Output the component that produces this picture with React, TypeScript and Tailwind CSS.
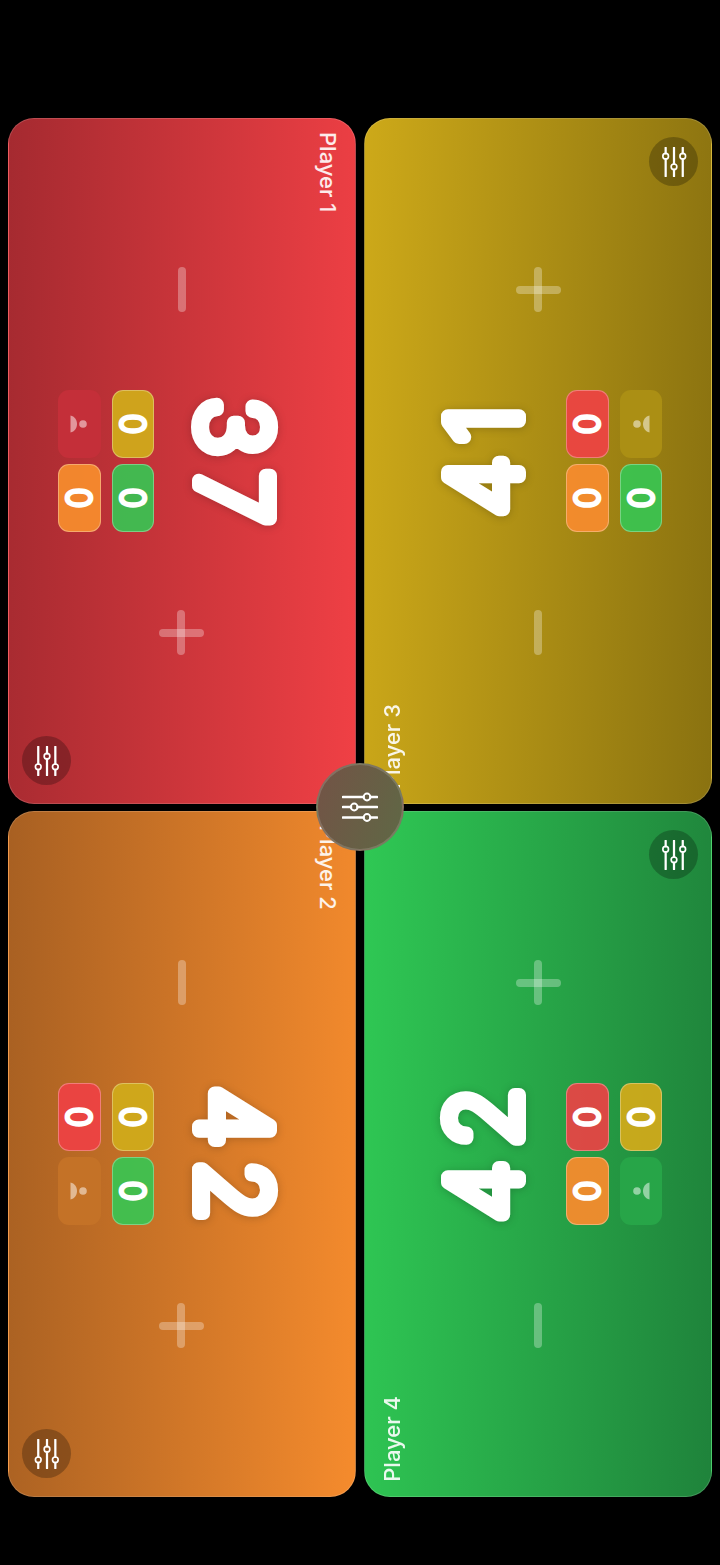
const PLAYERS = [
  { name: "Player 1", life: "37", self: 0, flip: false, card: "bg-[linear-gradient(92deg,#a52a30,#f04045)]", selfTile: "bg-[#c42f39]" },
  { name: "Player 3", life: "41", self: 1, flip: true, card: "bg-[linear-gradient(92deg,#cda919,#8a7210)]", selfTile: "bg-[#ab8f14]" },
  { name: "Player 2", life: "42", self: 2, flip: false, card: "bg-[linear-gradient(92deg,#a86022,#f58b2d)]", selfTile: "bg-[#c47227]" },
  { name: "Player 4", life: "42", self: 3, flip: true, card: "bg-[linear-gradient(92deg,#2fc854,#1f833b)]", selfTile: "bg-[#27a548]" },
];

const TILES = [
  "bg-[#f04045]/90 border-white/30",
  "bg-[#d0aa1a]/95 border-white/30",
  "bg-[#f58b2d]/95 border-white/30",
  "bg-[#35c653]/90 border-white/30",
];

function Sliders({ className }: { className: string }) {
  return (
    <svg viewBox="0 0 36 30" fill="none" stroke="currentColor" strokeLinecap="round" className={className}>
      <g strokeWidth="2.7">
        <path d="M1 5h20.5M28.5 5H35" />
        <path d="M1 15h8M15.5 15H35" />
        <path d="M1 25.5h20.5M28.5 25.5H35" />
      </g>
      <g strokeWidth="2">
        <circle cx="25" cy="5" r="3.4" />
        <circle cx="12.2" cy="15" r="3.4" />
        <circle cx="25" cy="25.5" r="3.4" />
      </g>
    </svg>
  );
}

function PersonIcon({ flip }: { flip: boolean }) {
  return (
    <svg viewBox="0 0 20 20" className={`w-[20px] h-[20px] ${flip ? "rotate-180" : ""}`}>
      <circle cx="14" cy="10" r="3.8" fill="#fff" fillOpacity="0.5" />
      <path d="M1.500 1.500c4 .8 6.500 4.200 6.500 8.500s-2.500 7.700-6.500 8.500Z" fill="#fff" fillOpacity="0.5" />
    </svg>
  );
}

// thin Inter with a wide round-joined stroke gives the rounded heavy numerals
function RoundNumber({ value, box, size, weight, stroke, spacing, flip, dy = 0, className }: {
  value: string; box: number; size: number; weight: number; stroke: number; spacing: number; flip: boolean; dy?: number; className?: string;
}) {
  const c = box / 2;
  return (
    <svg width={box} height={box} className={className}>
      <text
        x={c + spacing / 2}
        y={c + dy}
        textAnchor="middle"
        dominantBaseline="central"
        transform={`rotate(${flip ? -90 : 90} ${c} ${c})`}
        fontFamily="Inter, sans-serif"
        fontSize={size}
        fontWeight={weight}
        letterSpacing={spacing}
        fill="#fff"
        stroke="#fff"
        strokeWidth={stroke}
        strokeLinejoin="round"
        strokeLinecap="round"
      >
        {value}
      </text>
    </svg>
  );
}

function Counter({ index, player }: { index: number; player: (typeof PLAYERS)[number] }) {
  if (index === player.self) {
    return (
      <div className={`h-[68px] rounded-[11px] flex items-center justify-center ${player.selfTile}`}>
        <PersonIcon flip={player.flip} />
      </div>
    );
  }
  return (
    <div className={`h-[68px] rounded-[11px] border flex items-center justify-center ${TILES[index]}`}>
      <RoundNumber value="0" box={40} size={33} weight={200} stroke={4} spacing={0} flip={player.flip} />
    </div>
  );
}

function PlusSign({ nudge }: { nudge: boolean }) {
  return (
    <div className={`relative w-[45px] h-[45px] ${nudge ? "mr-[2px]" : ""}`}>
      <div className="absolute left-[18.500px] top-0 w-[8px] h-[45px] rounded-full bg-white/30" />
      <div className="absolute left-0 top-[18.500px] w-[45px] h-[8px] rounded-full bg-white/30" />
    </div>
  );
}

function PlayerCard({ player }: { player: (typeof PLAYERS)[number] }) {
  const { flip } = player;
  const minus = <div className="w-[8px] h-[45px] rounded-full bg-white/30" />;
  return (
    <div className={`relative h-full rounded-[26px] border border-white/15 flex flex-col items-center justify-between py-[148px] ${player.card}`}>
      <span className={`absolute font-['Inter'] font-medium text-[22px] leading-[24px] text-white/90 [writing-mode:vertical-rl] ${flip ? "left-[15px] bottom-[14px] rotate-180" : "right-[15px] top-[13px]"}`}>
        {player.name}
      </span>

      <button className={`absolute w-[49px] h-[49px] rounded-full bg-black/25 flex items-center justify-center text-white ${flip ? "right-[13px] top-[18px]" : "left-[13px] bottom-[18px]"}`}>
        <Sliders className={`w-[30px] h-[30px] ${flip ? "-rotate-90" : "rotate-90"}`} />
      </button>

      {flip ? <PlusSign nudge={false} /> : minus}

      <div className={`flex items-center gap-[10px] ${flip ? "flex-row-reverse" : ""}`}>
        <div className="w-[96px] grid grid-cols-2 gap-x-[11px] gap-y-[6px]">
          {TILES.map((_, i) => (
            <Counter key={i} index={i} player={player} />
          ))}
        </div>
        <RoundNumber
          value={player.life}
          box={142}
          size={98}
          weight={200}
          stroke={14}
          spacing={14}
          flip={flip}
          dy={flip ? -2 : 1}
          className="overflow-visible drop-shadow-[0_1px_4px_rgba(0,0,0,0.2)]"
        />
      </div>

      {flip ? minus : <PlusSign nudge />}
    </div>
  );
}

export default function App() {
  return (
    <div className="relative w-[720px] h-[1565px] bg-black pt-[118px] px-[8px]">
      <div className="grid grid-cols-2 grid-rows-[686px_686px] gap-x-[8px] gap-y-[7px]">
        {PLAYERS.map((p) => (
          <PlayerCard key={p.name} player={p} />
        ))}
      </div>

      <button className="absolute left-[316px] top-[763px] w-[88px] h-[88px] rounded-full bg-[linear-gradient(110deg,#735346,#5f6845)] border-2 border-white/15 flex items-center justify-center text-white">
        <Sliders className="w-[36px] h-[30px]" />
      </button>
    </div>
  );
}
